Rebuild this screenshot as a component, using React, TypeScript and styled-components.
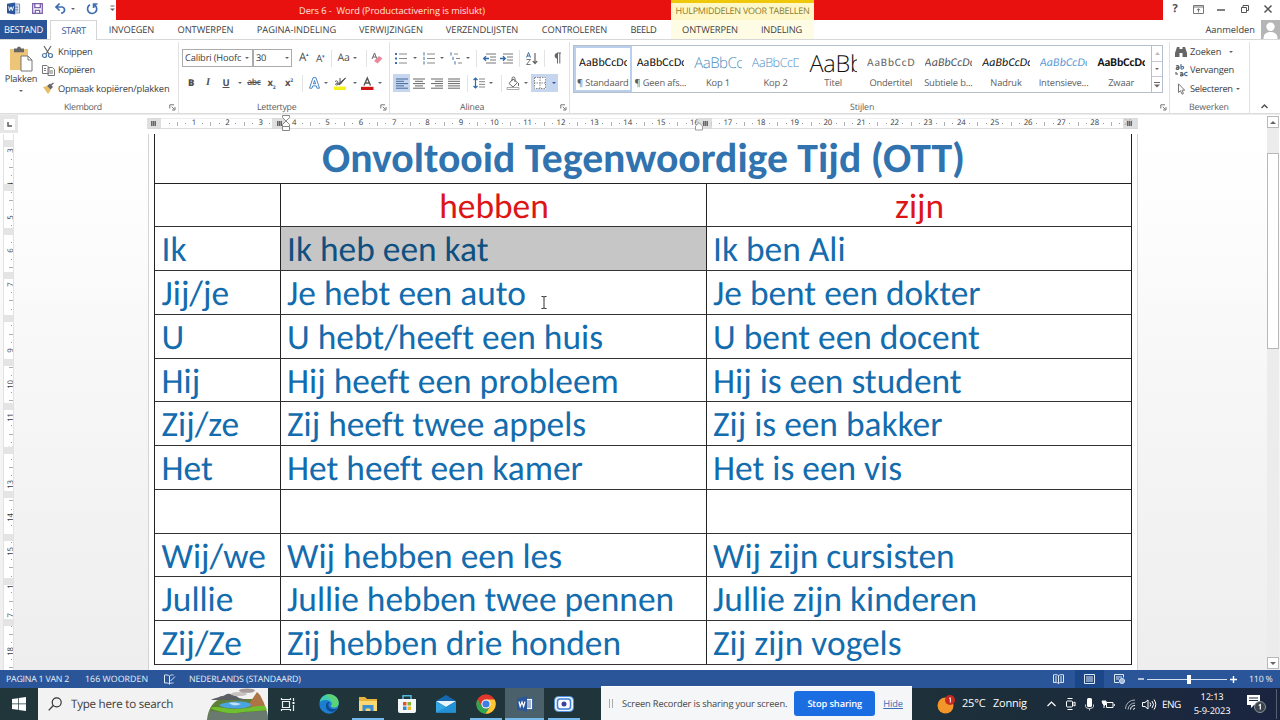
import React from "react";
import styled, { createGlobalStyle } from "styled-components";

const Global = createGlobalStyle`
  * { box-sizing: border-box; }
  body { margin: 0; overflow: hidden; }
  #root { font-family: "Open Sans", "Noto Sans", sans-serif; font-size: 9.3px; color: #3c3c3c; text-rendering: geometricPrecision; }
  svg { display: block; flex: none; overflow: visible; }
`;

/* ---------- shared ---------- */

const Window = styled.div`
  width: 1280px;
  height: 720px;
  display: flex;
  flex-direction: column;
  background: #fff;
  overflow: hidden;
`;

const Label = styled.span<{ $ls?: number; $size?: number; $color?: string }>`
  white-space: pre;
  flex: none;
  letter-spacing: ${(p) => p.$ls ?? -0.2}px;
  font-size: ${(p) => p.$size ?? 9.3}px;
  color: ${(p) => p.$color ?? "inherit"};
  line-height: 14px;
`;

const Slot = styled.span<{ $w: number; $on?: boolean }>`
  width: ${(p) => p.$w}px;
  height: 18px;
  flex: none;
  display: flex;
  align-items: center;
  justify-content: center;
  white-space: nowrap;
  background: ${(p) => (p.$on ? "#c5d6ee" : "transparent")};
`;

const CaretShape = styled.i<{ $c?: string }>`
  width: 0;
  height: 0;
  flex: none;
  border: 2.2px solid transparent;
  border-top: 2.8px solid ${(p) => p.$c ?? "#666"};
  border-bottom: 0;
`;

const Caret = ({ w, c }: { w: number; c?: string }) => (
  <Slot $w={w}><CaretShape $c={c} /></Slot>
);

const Rule = styled.i`
  width: 1px;
  height: 17px;
  background: #e3e3e3;
`;

const Divider = ({ w }: { w: number }) => <Slot $w={w}><Rule /></Slot>;

/* ---------- title bar ---------- */

const TitleBar = styled.header`
  height: 20px;
  flex: none;
  display: flex;
  background: #e9110f;
`;

const QuickAccess = styled.div`
  width: 116px;
  background: #fff;
  display: flex;
  align-items: center;
  padding-left: 7px;
  height: 20px;
  padding-bottom: 3px;
`;

const DocTitle = styled.div`
  width: 555px;
  padding: 1px 0 0 183px;
  color: #ffe3dc;
  display: flex;
  align-items: center;
`;

const ContextTitle = styled.div`
  width: 143px;
  border-top: 3px solid #efc80c;
  background: #fff7c8;
  color: #8b7b2d;
  display: flex;
  justify-content: center;
  align-items: center;
  padding-bottom: 2px;
`;

const WindowButtons = styled.div`
  margin-left: auto;
  width: 117px;
  background: #fff;
  display: flex;
  align-items: center;
  padding-bottom: 2px;
`;

/* ---------- tabs ---------- */

const TabRow = styled.nav`
  height: 20px;
  flex: none;
  display: flex;
  border-bottom: 1px solid #d8d8d8;
`;

const Tab = styled.span<{ $w: number; $kind?: "file" | "active" | "context" }>`
  width: ${(p) => p.$w}px;
  height: ${(p) => (p.$kind === "active" ? 20 : 19)}px;
  flex: none;
  display: flex;
  align-items: center;
  justify-content: center;
  padding-top: 1px;
  color: ${(p) => (p.$kind === "file" ? "#fff" : p.$kind === "active" ? "#2b579a" : "#3c3c3c")};
  background: ${(p) => (p.$kind === "file" ? "#2a5699" : p.$kind === "context" ? "#fffce6" : "#fff")};
  border: ${(p) => (p.$kind === "active" ? "1px solid #d4d4d4" : "0")};
  border-bottom: 0;
`;

const Gap = styled.i<{ $w: number }>`
  width: ${(p) => p.$w}px;
  flex: none;
`;

const Account = styled.div`
  margin-left: auto;
  display: flex;
  align-items: center;
  gap: 6px;
`;

/* ---------- ribbon ---------- */

const Ribbon = styled.section`
  height: 74px;
  flex: none;
  display: flex;
  border-bottom: 1px solid #dcdcdc;
  position: relative;
`;

const Group = styled.div<{ $w: number }>`
  width: ${(p) => p.$w}px;
  flex: none;
  height: 71px;
  margin-top: 2px;
  position: relative;
  border-right: 1px solid #e2e2e2;
  display: flex;
  flex-direction: column;
`;

const GroupName = styled.div<{ $x: number }>`
  margin-top: auto;
  height: 13px;
  flex: none;
  padding-left: ${(p) => p.$x}px;
  color: #5c5c5c;
  display: flex;
  align-items: center;
`;

const Launcher = styled.span`
  position: absolute;
  right: 2px;
  bottom: 2px;
`;

const LauncherIcon = () => (
  <Launcher>
    <svg width="7" height="7" viewBox="0 0 7 7" fill="none" stroke="#777" strokeWidth="1">
      <path d="M.8 4.5V.8H5M2.8 2.8l2.6 2.6M6 3v3H3" />
    </svg>
  </Launcher>
);

const ToolRow = styled.div<{ $x: number; $mt: number }>`
  display: flex;
  align-items: center;
  height: 18px;
  margin-top: ${(p) => p.$mt}px;
  padding-left: ${(p) => p.$x}px;
`;

const Clip = styled.div`
  display: flex;
  padding-top: 1px;
  height: 57px;
`;

const Paste = styled.div`
  width: 42px;
  display: flex;
  flex-direction: column;
  align-items: center;
  padding-top: 3px;
`;

const PasteCaret = styled.span`
  padding-top: 4px;
  display: flex;
`;

const ClipList = styled.div`
  display: flex;
  flex-direction: column;
`;

const ClipItem = styled.div<{ $icon: number }>`
  height: 18.3px;
  flex: none;
  display: grid;
  grid-template-columns: ${(p) => p.$icon}px auto;
  align-items: center;
  justify-content: start;
`;

const Combo = styled.span<{ $w: number }>`
  width: ${(p) => p.$w}px;
  height: 17.5px;
  flex: none;
  border: 1px solid #ababab;
  display: flex;
  align-items: center;
  padding-left: 2px;
`;

const ComboText = styled.span<{ $w: number }>`
  width: ${(p) => p.$w}px;
  overflow: hidden;
  display: flex;
`;

const Glyph = styled.b<{ $size: number; $weight?: number; $italic?: boolean; $under?: boolean; $strike?: boolean; $color?: string }>`
  font-size: ${(p) => p.$size}px;
  font-weight: ${(p) => p.$weight ?? 400};
  font-style: ${(p) => (p.$italic ? "italic" : "normal")};
  font-family: ${(p) => (p.$italic ? '"Liberation Serif", serif' : "inherit")};
  text-decoration: ${(p) => (p.$under ? "underline" : p.$strike ? "line-through" : "none")};
  color: ${(p) => p.$color ?? "#505050"};
  line-height: 14px;
  letter-spacing: -0.3px;
  sub, sup { font-size: 5px; line-height: 0; color: #3a6ea5; }
`;

/* ---------- styles gallery ---------- */

const Gallery = styled.div`
  display: flex;
  width: 590px;
  height: 48px;
  margin: 3px 0 0 3px;
  border: 1px solid #b5bfcc;
`;

const StyleCell = styled.div<{ $active?: boolean }>`
  width: 57.6px;
  height: 46px;
  flex: none;
  padding-top: 5px;
  display: flex;
  flex-direction: column;
  align-items: center;
  box-shadow: ${(p) => (p.$active ? "inset 0 0 0 2px #b9cfeb" : "none")};
`;

const Sample = styled.span<{ $size: number; $color: string; $weight?: number; $italic?: boolean; $ls?: number; $font?: string }>`
  width: 47.5px;
  height: 24.5px;
  flex: none;
  overflow: hidden;
  white-space: nowrap;
  line-height: 24.5px;
  font-family: ${(p) => p.$font ?? "Carlito, Lato"}, sans-serif;
  font-size: ${(p) => p.$size}px;
  font-weight: ${(p) => p.$weight ?? 400};
  font-style: ${(p) => (p.$italic ? "italic" : "normal")};
  letter-spacing: ${(p) => p.$ls ?? 0}px;
  color: ${(p) => p.$color};
`;

const GalleryScroll = styled.div`
  margin-left: auto;
  width: 11px;
  display: flex;
  flex-direction: column;
  border-left: 1px solid #b5bfcc;
`;

const ScrollStep = styled.span`
  flex: 1;
  display: flex;
  align-items: center;
  justify-content: center;
  border-bottom: 1px solid #c3cad3;
  &:last-child { border-bottom: 0; }
`;

const galleryItems = [
  { name: "¶ Standaard", text: "AaBbCcDc", ls: -0.16, size: 11.9, color: "#111", tr: 0.1 },
  { name: "¶ Geen afs...", text: "AaBbCcDc", ls: -0.16, size: 11.9, color: "#111", tr: 0.1 },
  { name: "Kop 1", text: "AaBbCc", ls: -0.1, size: 15, color: "#4f8fbf", font: '"Open Sans"', weight: 300, tr: -0.5 },
  { name: "Kop 2", text: "AaBbCcD", ls: -0.1, size: 12.6, color: "#4f8fbf", font: '"Open Sans"', weight: 300, tr: -0.45 },
  { name: "Titel", text: "AaBb", ls: -0.1, size: 23.5, color: "#111", font: '"Open Sans"', weight: 300, tr: -0.2 },
  { name: "Ondertitel", text: "AaBbCcD", ls: -0.15, size: 11.4, color: "#666", tr: 0.9 },
  { name: "Subtiele b...", text: "AaBbCcDc", ls: -0.15, size: 11.9, color: "#555", italic: true, tr: 0.15 },
  { name: "Nadruk", text: "AaBbCcDc", ls: -0.15, size: 11.9, color: "#111", italic: true, tr: 0.15 },
  { name: "Intensieve...", text: "AaBbCcDc", ls: -0.15, size: 11.9, color: "#5b9bd5", italic: true, tr: 0.15 },
  { name: "Zwaar", text: "AaBbCcDc", ls: -0.15, size: 11.8, color: "#111", weight: 700, tr: 0 },
];

/* ---------- rulers ---------- */

const RulerRow = styled.div`
  height: 20px;
  flex: none;
  display: flex;
  background: #fff;
  border-top: 1px solid #ececec;
`;

const TabCorner = styled.div`
  width: 18px;
  height: 18px;
  background: #e6e6e6;
  display: flex;
  align-items: center;
  justify-content: center;
`;

const CornerBox = styled.span`
  width: 11px;
  height: 11px;
  background: #fff;
  display: flex;
  align-items: center;
  justify-content: center;
`;

const HRuler = styled.div`
  width: 990px;
  height: 11px;
  margin: 3px 0 0 130px;
  position: relative;
  display: flex;
  padding-left: 25.2px;
  border-top: 1px solid #eee;
  border-bottom: 1px solid #ddd;
`;

const HUnit = styled.span`
  width: 33.37px;
  flex: none;
  display: grid;
  grid-template-columns: repeat(4, 8.34px);
  align-items: center;
  justify-items: center;
`;

const HUnitStart = styled.span`
  width: 8.34px;
  margin-left: -8.34px;
  flex: none;
  display: flex;
  align-items: center;
  justify-content: center;
`;

const Num = styled.span`
  width: 14px;
  text-align: center;
  font-size: 7.8px;
  font-weight: 500;
  line-height: 9px;
  letter-spacing: -0.1px;
  color: #3a3a3a;
`;

const Dot = styled.i`
  width: 1px;
  height: 1px;
  background: #999;
`;

const Tick = styled.i<{ $v?: boolean }>`
  width: ${(p) => (p.$v ? 4 : 1)}px;
  height: ${(p) => (p.$v ? 1 : 4)}px;
  background: #b0b0b0;
`;

const HMargin = styled.span<{ $x: number; $w: number; $grip: number }>`
  position: absolute;
  left: ${(p) => p.$x}px;
  top: -1px;
  width: ${(p) => p.$w}px;
  height: 11px;
  background: rgba(212, 212, 212, 0.75);
  &::after {
    content: "";
    position: absolute;
    left: ${(p) => p.$grip}px;
    top: 3px;
    width: 5px;
    height: 5px;
    background: repeating-linear-gradient(90deg, #666 0 1px, #999 1px 2px);
  }
`;

const Marker = styled.span<{ $x: number; $y: number }>`
  position: absolute;
  left: ${(p) => p.$x}px;
  top: ${(p) => p.$y}px;
`;

const VRuler = styled.div`
  width: 11px;
  height: 536px;
  margin-left: 3px;
  flex: none;
  position: relative;
  overflow: hidden;
  background: #fff;
  border: 1px solid #e2e2e2;
  border-width: 0 1px;
  display: flex;
  flex-direction: column;
  padding-top: 4.2px;
`;

const VUnit = styled.span`
  height: 33.37px;
  flex: none;
  display: grid;
  grid-template-rows: repeat(4, 8.34px);
  align-items: center;
  justify-items: center;
  ${Num} { transform: rotate(-90deg); }
`;

const RowGrip = styled.i<{ $y: number }>`
  position: absolute;
  left: 0;
  top: ${(p) => p.$y}px;
  width: 9px;
  height: 6.5px;
  background: #e4e4e4;
`;

/* ---------- document ---------- */

const Workspace = styled.main`
  height: 536px;
  flex: none;
  display: flex;
  background: linear-gradient(#fff 0, #fdfdfd 15%, #f6f6f6 50%, #eeeeee 100%);
`;

const Page = styled.article`
  margin-left: 134px;
  width: 990px;
  height: 536px;
  flex: none;
  background: #fff;
  border: 1px solid #d4d4d4;
  border-width: 0 1px;
  padding-left: 5px;
`;

const Table = styled.div`
  width: 978px;
  border: 1px solid #222;
  border-width: 0 1px;
  font-family: Carlito, Lato, sans-serif;
  font-variant-ligatures: none;
  font-size: 35.4px;
  color: #136cad;
  position: relative;
`;

const Heading = styled.div`
  height: 50px;
  border-bottom: 1px solid #222;
  text-align: center;
  font-size: 41.7px;
  font-weight: 700;
  color: #3173ae;
  line-height: 44px;
  padding: 3px 0 0 1px;
  white-space: nowrap;
`;

const Row = styled.div<{ $h: number }>`
  height: ${(p) => p.$h}px;
  display: grid;
  grid-template-columns: 125px 426px 425px;
  grid-template-rows: minmax(0, 1fr);
  border-bottom: 1px solid #333;
`;

const Cell = styled.div<{ $head?: boolean; $selected?: boolean }>`
  border-left: 1px solid #222;
  padding: 0 0 0 ${(p) => (p.$head ? 1 : 6)}px;
  &:first-child { border-left: 0; padding-left: 6.5px; }
  line-height: 44px;
  white-space: nowrap;
  text-align: ${(p) => (p.$head ? "center" : "left")};
  color: ${(p) => (p.$head ? "#dc1616" : p.$selected ? "#0f5080" : "inherit")};
  background: ${(p) => (p.$selected ? "#c6c6c6" : "transparent")};
`;

const rows: [number, string, string, string][] = [
  [43, "", "hebben", "zijn"],
  [44, "Ik", "Ik heb een kat", "Ik ben Ali"],
  [44, "Jij/je", "Je hebt een auto", "Je bent een dokter"],
  [44, "U", "U hebt/heeft een huis", "U bent een docent"],
  [43, "Hij", "Hij heeft een probleem", "Hij is een student"],
  [44, "Zij/ze", "Zij heeft twee appels", "Zij is een bakker"],
  [44, "Het", "Het heeft een kamer", "Het is een vis"],
  [44, "", "", ""],
  [43, "Wij/we", "Wij hebben een les", "Wij zijn cursisten"],
  [44, "Jullie", "Jullie hebben twee pennen", "Jullie zijn kinderen"],
  [44, "Zij/Ze", "Zij hebben drie honden", "Zij zijn vogels"],
];

const TextCursor = styled.span`
  position: absolute;
  left: 386px;
  top: 162px;
`;

const ScrollTrack = styled.aside`
  width: 12px;
  margin: -18px 1px 0 auto;
  height: 553px;
  background: #ececec;
  display: flex;
  flex-direction: column;
  justify-content: space-between;
  position: relative;
`;

const ScrollArrow = styled.span`
  height: 12px;
  background: #fff;
  border: 1px solid #b8b8b8;
  display: flex;
  align-items: center;
  justify-content: center;
`;

const ScrollThumb = styled.i`
  height: 196px;
  margin: 25px 0 auto;
  background: #fff;
  border: 1px solid #b8b8b8;
`;

/* ---------- status bar ---------- */

const StatusBar = styled.footer`
  height: 18px;
  flex: none;
  background: #2a5699;
  color: #e9f0fa;
  display: flex;
  align-items: center;
  padding-left: 6px;
`;

const StatusItem = styled.span<{ $w: number }>`
  width: ${(p) => p.$w}px;
  flex: none;
  display: flex;
  align-items: center;
`;

const ViewButton = styled.span<{ $w: number; $on?: boolean }>`
  width: ${(p) => p.$w}px;
  height: 18px;
  display: flex;
  align-items: center;
  justify-content: center;
  background: ${(p) => (p.$on ? "#1b4788" : "transparent")};
`;

const ZoomTrack = styled.span`
  width: 80px;
  height: 1px;
  background: #d5e0ef;
  display: flex;
  align-items: center;
  justify-content: center;
  margin: 0 3px;
`;

const ZoomKnob = styled.i`
  width: 4px;
  height: 9px;
  background: #fff;
  margin-left: 3px;
`;

/* ---------- taskbar ---------- */

const Taskbar = styled.div`
  height: 32px;
  flex: none;
  display: flex;
  align-items: center;
  background: linear-gradient(90deg, #21363b 0, #1e343a 65%, #1c2d3a 80%, #1a2440 100%);
  color: #fff;
  position: relative;
`;

const TaskCell = styled.span<{ $w: number; $on?: boolean; $line?: number }>`
  width: ${(p) => p.$w}px;
  height: 32px;
  flex: none;
  display: flex;
  align-items: center;
  justify-content: center;
  background: ${(p) => (p.$on ? "#4a616b" : "transparent")};
  position: relative;
  &::after {
    content: "";
    position: absolute;
    bottom: 0;
    left: calc(50% - ${(p) => (p.$line ?? 0) / 2}px);
    width: ${(p) => p.$line ?? 0}px;
    height: 2px;
    background: #76b9ed;
  }
`;

const Search = styled.div`
  width: 230px;
  height: 32px;
  flex: none;
  background: #f2f2f2;
  display: flex;
  align-items: center;
  padding-left: 10px;
  color: #3c3c3c;
  & > span { padding-top: 2px; }
`;

const Tray = styled.div`
  margin-left: auto;
  display: flex;
  align-items: center;
  height: 32px;
`;

const Clock = styled.div`
  width: 52px;
  display: flex;
  flex-direction: column;
  align-items: center;
  line-height: 14px;
`;

const ShareBar = styled.div`
  position: absolute;
  left: 601px;
  top: -2px;
  width: 311px;
  height: 34px;
  background: #f4f6f7;
  color: #444;
  display: flex;
  align-items: center;
  border-top: 1px solid #fff;
`;

const Grip = styled.i`
  width: 4px;
  height: 9px;
  margin: 0 9px 0 8px;
  border: 1px solid #aaa;
  border-width: 0 1px;
`;

const StopButton = styled.span`
  width: 81px;
  height: 25px;
  margin-left: 7px;
  border-radius: 3px;
  background: #1a6ee2;
  color: #fff;
  font-weight: 600;
  display: flex;
  align-items: center;
  justify-content: center;
`;

const HideLink = styled.span`
  margin-left: 8px;
  color: #3b6fb5;
  text-decoration: underline;
  display: flex;
`;

const TrayEdge = styled.i`
  width: 1px;
  height: 30px;
  background: #56606e;
`;

/* ---------- icons ---------- */

const WordIcon = ({ s }: { s: number }) => (
  <svg width={s} height={s} viewBox="0 0 16 16">
    <path d="M9 2.5h6.5v11H9z" fill="#fff" stroke="#2b579a" strokeWidth=".8" />
    <path d="M10 5h4M10 7h4M10 9h4M10 11h4" stroke="#2b579a" strokeWidth=".9" />
    <path d="M0 2.2 10 .5v15L0 13.8z" fill="#2b579a" />
    <path d="m2 5.5 1.2 5L5 6l1.6 4.5 1.4-5" fill="none" stroke="#fff" strokeWidth="1.2" />
  </svg>
);

const Lines = ({ rows: r, color = "#666" }: { rows: [number, number][]; color?: string }) => (
  <svg width="12" height="11" viewBox="0 0 12 11" stroke={color} strokeWidth="1">
    {r.map(([a, b], i) => <path key={i} d={`M${a} ${1 + i * 2.3}H${b}`} />)}
  </svg>
);

const ListIcon = ({ kind }: { kind: "bullet" | "number" | "multi" }) => (
  <svg width="12" height="13" viewBox="0 0 12 13">
    {[2, 6.5, 11].map((y, i) => {
      const dx = kind === "multi" ? i * 2 : 0;
      return (
        <g key={y}>
          {kind === "bullet"
            ? <rect x="0" y={y - 1} width="2" height="2" fill="#3c6ea8" />
            : <path d={`M${dx + 1} ${y - 1.7}v3.2`} stroke="#3c6ea8" strokeWidth="1" />}
          <path d={`M${4 + dx} ${y}H${kind === "multi" ? 8 + dx : 12}`} stroke="#888" />
        </g>
      );
    })}
  </svg>
);

const IndentIcon = ({ right }: { right?: boolean }) => (
  <svg width="13" height="11" viewBox="0 0 13 11" fill="none">
    <path d="M3 1h10M7 4h6M7 7h6M3 10h10" stroke="#777" />
    <path d={right ? "M0 5.5h5M3 3.3l2.3 2.2L3 7.7" : "M6 5.5H1M3 3.3.7 5.5 3 7.7"} stroke="#2f6aa8" strokeWidth="1.3" />
  </svg>
);

const CornerL = () => (
  <svg width="5" height="5" viewBox="0 0 5 5"><path d="M1 0v4h4" fill="none" stroke="#555" strokeWidth="1.4" /></svg>
);

const Hills = () => (
  <svg width="62" height="32" viewBox="0 0 62 32">
    <path d="M0 32C1 20 8 10 16 11h32c8 3 13 10 13 21z" fill="#5d7f3a" />
    <path d="M4 12c5-3 8-2 10-4 3 1 5-3 9-2 4 2 6 1 9 4l9 2H4z" fill="#5a5f63" />
    <ellipse cx="32" cy="6" rx="8" ry="2" fill="#c8c2bf" />
    <ellipse cx="40" cy="2.6" rx="8" ry="2.2" fill="#a59b9b" />
    <path d="M42 16 50 4l3 3 4 8 2 6-12 2z" fill="#ad7445" />
    <path d="M12 17c6-3 20-5 30-2 4 2 1 4-5 5-8 1-20 1-25-3z" fill="#4ba3e0" />
    <path d="M22 15c5-1 9 0 12 1-4 2-9 2-12-1z" fill="#bfe0f6" />
    <path d="M3 20c8-3 16 2 28 1 10 0 18-4 27-3l2 4c-14 2-22 1-30 3-10 1-20-2-27-5z" fill="#6fc02f" />
    <path d="M2 23c10 0 18 4 30 2 10-1 20-2 28-2l1 9H1z" fill="#6b7a70" />
  </svg>
);

/* ---------- regions ---------- */

const Title = () => (
  <TitleBar>
    <QuickAccess>
      <WordIcon s={13} />
      <Gap $w={12} />
      <svg width="11" height="11" viewBox="0 0 11 11" fill="none" stroke="#7a5fa8" strokeWidth="1.3"><path d="M.7.7h9.6v9.6H.7zM2.8.7v4h5.5v-4M3.3 10V7.3h4.4V10" /></svg>
      <Gap $w={12} />
      <svg width="12" height="11" viewBox="0 0 12 11" fill="none" stroke="#3b6cb0" strokeWidth="1.7"><path d="M1 4h6.5a3.2 3.2 0 0 1 0 6H6M4.6.5 1 4l3.6 3.5" /></svg>
      <Caret w={12} />
      <Gap $w={7} />
      <svg width="12" height="12" viewBox="0 0 12 12" fill="none" stroke="#3b6cb0" strokeWidth="1.7"><path d="M4 1.8A4.6 4.6 0 1 0 8.6 2M11.500 1H7.600v4" /></svg>
      <Gap $w={12} />
      <svg width="5" height="7" viewBox="0 0 5 7"><path d="M.5 1h4" stroke="#666" /><path d="M0 3.500h5L2.500 6z" fill="#666" /></svg>
    </QuickAccess>
    <DocTitle><Label $ls={-0.07}>Ders 6 -  Word (Productactivering is mislukt)</Label></DocTitle>
    <ContextTitle><Label $ls={-0.26} $size={9}>HULPMIDDELEN VOOR TABELLEN</Label></ContextTitle>
    <WindowButtons>
      <Slot $w={24}><Glyph $size={11} $weight={700}>?</Glyph></Slot>
      <Slot $w={22}><svg width="11" height="9" viewBox="0 0 11 9" fill="none" stroke="#777"><path d="M.5.5h10v8H.5zM.5 2h10M5.500 7.500V4M3.800 5.300l1.700-1.600 1.700 1.600" /></svg></Slot>
      <Slot $w={24}><svg width="8" height="8" viewBox="0 0 8 8"><path d="M0 5h8" stroke="#555" strokeWidth="1.500" /></svg></Slot>
      <Slot $w={23}><svg width="8" height="8" viewBox="0 0 8 8" fill="none" stroke="#555"><path d="M.5 2.500h5v5h-5zM2 2.500V.5h5.500v5H6" /></svg></Slot>
      <Slot $w={24}><svg width="8" height="8" viewBox="0 0 8 8"><path d="m.5.5 7 7m0-7-7 7" stroke="#555" strokeWidth="1.500" /></svg></Slot>
    </WindowButtons>
  </TitleBar>
);

const Tabs = () => (
  <TabRow>
    <Tab $w={47} $kind="file"><Label $ls={-0.3}>BESTAND</Label></Tab>
    <Gap $w={3} />
    <Tab $w={47} $kind="active"><Label $ls={-0.55}>START</Label></Tab>
    <Tab $w={69}><Label $ls={-0.13}>INVOEGEN</Label></Tab>
    <Tab $w={79}><Label $ls={-0.08}>ONTWERPEN</Label></Tab>
    <Tab $w={103}><Label $ls={0}>PAGINA-INDELING</Label></Tab>
    <Tab $w={86}><Label $ls={0}>VERWIJZINGEN</Label></Tab>
    <Tab $w={96}><Label $ls={-0.04}>VERZENDLIJSTEN</Label></Tab>
    <Tab $w={89}><Label $ls={-0.07}>CONTROLEREN</Label></Tab>
    <Tab $w={49}><Label $ls={-0.4}>BEELD</Label></Tab>
    <Gap $w={3} />
    <Tab $w={78} $kind="context"><Label $ls={-0.08}>ONTWERPEN</Label></Tab>
    <Tab $w={65} $kind="context"><Label $ls={-0.2}>INDELING</Label></Tab>
    <Account>
      <Label $ls={0}>Aanmelden</Label>
      <svg width="19" height="19" viewBox="0 0 19 19"><path d="M0 0h19v19H0z" fill="#b5b5b5" /><circle cx="9.500" cy="6.800" r="4.200" fill="#fff" /><path d="M2.500 19c0-5 2.500-7 7-7s7 2 7 7z" fill="#fff" /></svg>
    </Account>
  </TabRow>
);

const Clipboard = () => (
  <Group $w={179}>
    <Clip>
      <Paste>
        <svg width="24" height="26" viewBox="0 0 24 26">
          <path d="M1 3h18v21H1z" fill="#ecc578" />
          <path d="M5 2.500h3C8 0 12 0 12 2.500h3v3.700H5z" fill="#666" />
          <path d="M12 10h7l4 4v11H12z" fill="#fff" stroke="#777" />
          <path d="M19 10v4h4" fill="none" stroke="#777" />
        </svg>
        <Label $ls={-0.2}>Plakken</Label>
        <PasteCaret><CaretShape /></PasteCaret>
      </Paste>
      <ClipList>
        <ClipItem $icon={16}>
          <svg width="11" height="12" viewBox="0 0 11 12" fill="none" stroke="#666" strokeWidth="1.200"><path d="M2 0l5 8M9 0 4 8" /><circle cx="2.500" cy="9.500" r="2" stroke="#4a78a8" /><circle cx="8.500" cy="9.500" r="2" stroke="#4a78a8" /></svg>
          <Label $ls={-0.23}>Knippen</Label>
        </ClipItem>
        <ClipItem $icon={16}>
          <svg width="13" height="11" viewBox="0 0 13 11" fill="#fff" stroke="#777"><path d="M.5.5H5l2 2v6H.5zM6 2.500h4.500l2 2v6H6zM2 3.500h2M2 5.500h2M8 6h3M8 8h3" /></svg>
          <Label $ls={-0.3}>Kopiëren</Label>
        </ClipItem>
        <ClipItem $icon={16}>
          <svg width="13" height="11" viewBox="0 0 13 11"><path d="m1 4 4-1 4 4-3 4z" fill="#e6c067" /><path d="m5 3 3-2.500 3 3.500-2.500 2.500z" fill="#666" /><path d="m9 2 2.500-2" stroke="#666" strokeWidth="1.500" /></svg>
          <Label $ls={-0.15}>Opmaak kopiëren/plakken</Label>
        </ClipItem>
      </ClipList>
    </Clip>
    <GroupName $x={64}><Label $ls={-0.3} $size={8.8}>Klembord</Label></GroupName>
    <LauncherIcon />
  </Group>
);

const FontGroup = () => (
  <Group $w={211}>
    <ToolRow $x={3} $mt={7}>
      <Combo $w={71}><ComboText $w={57}><Label $ls={-0.15}>Calibri (Hoofc</Label></ComboText><Caret w={9} /></Combo>
      <Combo $w={39}><ComboText $w={28}><Label $ls={-0.3}>30</Label></ComboText><Caret w={8} /></Combo>
      <Slot $w={23}><Glyph $size={11.5}>A<sup>▴</sup></Glyph></Slot>
      <Slot $w={10}><Glyph $size={10}>A<sup>▾</sup></Glyph></Slot>
      <Divider w={12} />
      <Slot $w={13}><Glyph $size={10.5}>Aa</Glyph></Slot>
      <Caret w={10} />
      <Divider w={12} />
      <Slot $w={10}>
        <svg width="12" height="12" viewBox="0 0 12 12"><path d="M1 7 3.500 1 6 7M2 5h3" fill="none" stroke="#666" /><path d="m3 9 5-5 3.500 2.500-5 5z" fill="#e88a9c" /></svg>
      </Slot>
    </ToolRow>
    <ToolRow $x={3} $mt={7}>
      <Slot $w={18}><Glyph $size={9.5} $weight={800}>B</Glyph></Slot>
      <Slot $w={16}><Glyph $size={10.5} $italic $weight={700}>I</Glyph></Slot>
      <Slot $w={20}><Glyph $size={9.5} $weight={700} $under>U</Glyph></Slot>
      <Caret w={7} />
      <Slot $w={22}><Glyph $size={8.5} $weight={600} $strike>abc</Glyph></Slot>
      <Slot $w={13}><Glyph $size={9.5} $weight={700}>x<sub>2</sub></Glyph></Slot>
      <Slot $w={22}><Glyph $size={9.5} $weight={700}>x<sup>2</sup></Glyph></Slot>
      <Divider w={4} />
      <Slot $w={20}>
        <svg width="11" height="12" viewBox="0 0 11 12" fill="#fff" stroke="#4c86c6" strokeWidth="1"><path d="M4 .7h3l3.500 10.500H8l-.7-2.300H3.700L3 11.200H.5zM5.500 3.500 4.400 6.800h2.200z" /></svg>
      </Slot>
      <Caret w={3} />
      <Slot $w={26}>
        <svg width="13" height="13" viewBox="0 0 13 13"><path d="M0 9.500h12v3.500H0z" fill="#f6f01b" /><path d="m11.500 1-5 6-1.500 1 .5-2z" fill="#555" stroke="#555" /><path d="M1 4.500c2-1.500 3 0 3 1v2.500M4 6c-3 0-3 2-1.500 2S4 7 4 6M6 1v6" fill="none" stroke="#555" /></svg>
      </Slot>
      <Caret w={3} />
      <Slot $w={22}>
        <svg width="13" height="13" viewBox="0 0 13 13"><path d="M0 9.800h12.500v3.200H0z" fill="#d01414" /><path d="M3 8.500 6.300 1l3.200 7.500M4.200 6h4" fill="none" stroke="#555" strokeWidth="1.400" /></svg>
      </Slot>
      <Caret w={4} />
    </ToolRow>
    <GroupName $x={78}><Label $ls={-0.29} $size={8.8}>Lettertype</Label></GroupName>
    <LauncherIcon />
  </Group>
);

const ParagraphGroup = () => (
  <Group $w={180}>
    <ToolRow $x={0} $mt={7}>
      <Slot $w={22}><ListIcon kind="bullet" /></Slot><Caret w={6} />
      <Slot $w={21}><ListIcon kind="number" /></Slot><Caret w={6} />
      <Slot $w={22}><ListIcon kind="multi" /></Slot><Caret w={2} />
      <Divider w={15} />
      <Slot $w={10}><IndentIcon /></Slot>
      <Slot $w={24}><IndentIcon right /></Slot>
      <Divider w={3} />
      <Slot $w={22}>
        <svg width="12" height="13" viewBox="0 0 12 13" fill="none"><path d="M.5 5.500 2.500.5l2 5M1 4h3" stroke="#3c6ea8" /><path d="M.5 7.500h4l-4 5h4" stroke="#777" /><path d="M9 1v10M6.800 9 9 11.500 11.200 9" stroke="#666" strokeWidth="1.200" /></svg>
      </Slot>
      <Divider w={2} />
      <Slot $w={24}>
        <svg width="8" height="11" viewBox="0 0 8 11"><path d="M4 0h4M4.500 0v10.500M6.800 0v10.500" stroke="#666" strokeWidth="1" /><path d="M4.500 0a2.800 2.800 0 0 0 0 5.600z" fill="#666" /></svg>
      </Slot>
    </ToolRow>
    <ToolRow $x={3} $mt={7}>
      <Slot $w={17} $on><Lines color="#47699a" rows={[[0, 12], [0, 8], [0, 12], [0, 8], [0, 12]]} /></Slot>
      <Slot $w={18}><Lines rows={[[0, 12], [2, 10], [0, 12], [2, 10], [0, 12]]} /></Slot>
      <Slot $w={18}><Lines rows={[[0, 12], [4, 12], [0, 12], [4, 12], [0, 12]]} /></Slot>
      <Slot $w={16}><Lines rows={[[0, 12], [0, 12], [0, 12], [0, 12], [0, 12]]} /></Slot>
      <Divider w={10} />
      <Slot $w={14}>
        <svg width="12" height="12" viewBox="0 0 12 12" fill="none"><path d="M2.500 1v10M.5 3l2-2 2 2M.5 9l2 2 2-2" stroke="#2f6aa8" strokeWidth="1.200" /><path d="M6 2h6M6 4.700h6M6 7.400h6M6 10h6" stroke="#888" /></svg>
      </Slot>
      <Caret w={10} />
      <Divider w={10} />
      <Slot $w={14}>
        <svg width="13" height="13" viewBox="0 0 13 13" fill="none" stroke="#666"><path d="M6 2 2 6.500l4 3.500 4.500-4.500zM5 4V1.500a1.500 1.500 0 0 1 3 0V5M11.500 6v3" /><path d="M0 10.500h12v2H0z" stroke="#aaa" fill="#fff" /></svg>
      </Slot>
      <Caret w={11} />
      <Slot $w={18} $on>
        <svg width="12" height="12" viewBox="0 0 12 12" fill="#fff"><path d="M0 0h12v12H0z" /><path d="M.5.5h11v11H.5zM6 0v12M0 6h12" fill="none" stroke="#888" strokeDasharray="1.500 1" /></svg>
      </Slot>
      <Slot $w={9} $on><CaretShape $c="#2b579a" /></Slot>
    </ToolRow>
    <GroupName $x={70}><Label $ls={-0.15} $size={8.8}>Alinea</Label></GroupName>
    <LauncherIcon />
  </Group>
);

const StylesGroup = () => (
  <Group $w={600}>
    <Gallery>
      {galleryItems.map((g, i) => (
        <StyleCell key={g.name} $active={i === 0}>
          <Sample $size={g.size} $color={g.color} $font={g.font} $weight={g.weight} $italic={g.italic} $ls={g.tr}>{g.text}</Sample>
          <Label $ls={g.ls} $color="#5c5c5c">{g.name}</Label>
        </StyleCell>
      ))}
      <GalleryScroll>
        <ScrollStep><svg width="5" height="3" viewBox="0 0 5 3"><path d="M0 3h5L2.500 0z" fill="#bbb" /></svg></ScrollStep>
        <ScrollStep><CaretShape /></ScrollStep>
        <ScrollStep><svg width="6" height="6" viewBox="0 0 6 6"><path d="M0 .5h6" stroke="#666" /><path d="M0 2.500h6L3 5.500z" fill="#666" /></svg></ScrollStep>
      </GalleryScroll>
    </Gallery>
    <GroupName $x={280}><Label $ls={-0.1} $size={8.8}>Stijlen</Label></GroupName>
    <LauncherIcon />
  </Group>
);

const EditGroup = () => (
  <Group $w={80}>
    <Clip>
      <Gap $w={5} />
      <ClipList>
        <ClipItem $icon={15}>
          <svg width="12" height="10" viewBox="0 0 12 10" fill="#666"><path d="M2 0h2.500v2h3V0H10l2 6v4H7.500V6h-3v4H0V6z" /></svg>
          <StatusItem $w={48}><Label $ls={-0.1}>Zoeken</Label><Gap $w={8} /><CaretShape /></StatusItem>
        </ClipItem>
        <ClipItem $icon={15}>
          <svg width="13" height="12" viewBox="0 0 13 12" fill="none" strokeWidth="1.100"><path d="M1 2c2-1 3 0 3 1v2M4 3.500C1 3 .5 5.500 2 5.500S4 4.500 4 3.500M5 9c2-1 3 0 3 1v2M8 10c-3 0-3 2-1.500 2S8 11 8 10M1 8v2h2" stroke="#555" /><path d="M6 0v5M6 3c3-2 4 2.500 0 2M12.500 8.500c-4-1-4 4 0 3" stroke="#3c6ea8" /></svg>
          <Label $ls={-0.24}>Vervangen</Label>
        </ClipItem>
        <ClipItem $icon={15}>
          <svg width="12" height="12" viewBox="0 0 12 12" fill="#fff" stroke="#777"><path d="M3.500.8v8.700l2-1.800 1.500 3.500 1.500-.7L7 7.200h2.700z" /></svg>
          <StatusItem $w={52}><Label $ls={-0.28}>Selecteren</Label><Gap $w={3} /><CaretShape /></StatusItem>
        </ClipItem>
      </ClipList>
    </Clip>
    <GroupName $x={19}><Label $ls={-0.15} $size={8.8}>Bewerken</Label></GroupName>
  </Group>
);

const Collapse = styled.span`
  margin: auto 12px 4px auto;
`;

const HorizontalRuler = () => (
  <RulerRow>
    <TabCorner><CornerBox><CornerL /></CornerBox></TabCorner>
    <HRuler>
      <HUnitStart><Dot /></HUnitStart>
      {Array.from({ length: 28 }, (_, i) => (
        <HUnit key={i}><Tick /><Dot /><Num>{i + 1}</Num><Dot /></HUnit>
      ))}
      <HUnit><Tick /><Dot /><Num>29</Num><i /></HUnit>
      <HMargin $x={-1} $w={14} $grip={4} />
      <HMargin $x={124} $w={13} $grip={5} />
      <HMargin $x={549} $w={15} $grip={6} />
      <HMargin $x={975} $w={15} $grip={4} />
      <Marker $x={134} $y={-4}>
        <svg width="8" height="16" viewBox="0 0 8 16" fill="#fff" stroke="#888"><path d="M.5.5h7v2L4 6 .5 2.500zM4 6l3.500 3.500v2h-7v-2zM.5 11.500h7v4h-7z" /></svg>
      </Marker>
      <Marker $x={547} $y={3}>
        <svg width="8" height="9" viewBox="0 0 8 9" fill="#fff" stroke="#999"><path d="M4 .7 7.500 4v4h-7V4z" /></svg>
      </Marker>
    </HRuler>
  </RulerRow>
);

const VerticalRuler = () => (
  <VRuler>
    {Array.from({ length: 16 }, (_, i) => (
      <VUnit key={i}><Dot /><Num>{i + 3}</Num><Dot /><Tick $v /></VUnit>
    ))}
    {[6, 50, 94, 138, 181, 225, 269, 313, 357, 400, 444, 485].map((y) => <RowGrip key={y} $y={y} />)}
  </VRuler>
);

const Document = () => (
  <Workspace>
    <VerticalRuler />
    <Page>
      <Table>
        <Heading>Onvoltooid Tegenwoordige Tijd (OTT)</Heading>
        {rows.map(([h, a, b, c], i) => (
          <Row key={i} $h={h}>
            <Cell>{a}</Cell>
            <Cell $head={i === 0} $selected={i === 1}>{b}</Cell>
            <Cell $head={i === 0}>{c}</Cell>
          </Row>
        ))}
        <TextCursor>
          <svg width="6" height="13" viewBox="0 0 6 13" fill="none" stroke="#333"><path d="M.5.5H2.500L3 1.200 3.500.5h2M3 1v11M.5 12.500h2l.5-.7.5.7h2" /></svg>
        </TextCursor>
      </Table>
    </Page>
    <ScrollTrack>
      <ScrollArrow><svg width="6" height="3" viewBox="0 0 6 3"><path d="M0 3h6L3 0z" fill="#666" /></svg></ScrollArrow>
      <ScrollThumb />
      <ScrollArrow><svg width="6" height="3" viewBox="0 0 6 3"><path d="M0 0h6L3 3z" fill="#666" /></svg></ScrollArrow>
    </ScrollTrack>
  </Workspace>
);

const Status = () => (
  <StatusBar>
    <StatusItem $w={79}><Label $ls={-0.23} $size={8.8}>PAGINA 1 VAN 2</Label></StatusItem>
    <StatusItem $w={79}><Label $ls={0.06} $size={8.8}>166 WOORDEN</Label></StatusItem>
    <StatusItem $w={25}>
      <svg width="12" height="11" viewBox="0 0 12 11" fill="none" stroke="#dfe8f5"><path d="M5.500 2C4 .8 2 .8.500 1v8c2-.2 4 0 5 1 1-1 2.500-1.200 4-1M5.500 2v8M5.500 2C7 .9 8 .8 9.500 1M6.500 7 11 2.500" /></svg>
    </StatusItem>
    <StatusItem $w={855}><Label $ls={-0.14} $size={8.8}>NEDERLANDS (STANDAARD)</Label></StatusItem>
    <ViewButton $w={28}><svg width="11" height="10" viewBox="0 0 11 10" fill="none" stroke="#dfe8f5"><path d="M5.500 1.500C4 .5 2 .5.500.8v7.700c2-.2 4 0 5 .9 1-.9 3-1.100 5-.9V.8c-2-.2-3.500-.3-5 .7v8M2 3h2M2 5h2M2 7h2M7 3h2M7 5h2M7 7h2" /></svg></ViewButton>
    <Gap $w={3} />
    <ViewButton $w={29} $on><svg width="11" height="10" viewBox="0 0 11 10" fill="none" stroke="#dfe8f5"><path d="M.5.500h10v9H.5zM2 3h7M2 5h7M2 7h7" /></svg></ViewButton>
    <ViewButton $w={30}><svg width="11" height="10" viewBox="0 0 11 10" fill="none" stroke="#dfe8f5"><path d="M5 8.500H.5v-8h9v3M2 3h6M2 5h3" /><circle cx="8" cy="7" r="2.500" fill="#9fb8dc" /></svg></ViewButton>
    <Gap $w={4} />
    <svg width="6" height="2" viewBox="0 0 6 2"><path d="M0 1h6" stroke="#fff" strokeWidth="1.300" /></svg>
    <ZoomTrack><ZoomKnob /></ZoomTrack>
    <svg width="7" height="7" viewBox="0 0 7 7"><path d="M0 3.500h7M3.500 0v7" stroke="#fff" strokeWidth="1.400" /></svg>
    <Gap $w={12} />
    <Label $ls={-0.2} $size={8.8}>110 %</Label>
  </StatusBar>
);

const Tasks = () => (
  <Taskbar>
    <TaskCell $w={38}><svg width="14" height="14" viewBox="0 0 14 14" fill="#fff"><path d="M0 2 6 1.200v5.400H0zM6.700 1.100 14 0v6.600H6.700zM0 7.300h6v5.400L0 12zM6.700 7.300H14V14l-7.300-1z" /></svg></TaskCell>
    <Search>
      <svg width="14" height="14" viewBox="0 0 14 14" fill="none" stroke="#333" strokeWidth="1.200"><circle cx="8.700" cy="5.300" r="4.500" /><path d="M5.300 8.500.7 13.300" /></svg>
      <Gap $w={9} />
      <Label $ls={-0.24} $size={11.6}>Type here to search</Label>
      <Gap $w={34} />
      <Hills />
    </Search>
    <TaskCell $w={39}>
      <svg width="14" height="13" viewBox="0 0 14 13" fill="none" stroke="#e8edef" strokeWidth="1.200"><path d="M1.500 3.500h7v6h-7zM.5 0v1.500h9V0M.5 13v-1.500h9V13M12.500 0v3M12.500 7v6" /><path d="M11.500 4h2v2h-2z" fill="#fff" stroke="none" /></svg>
    </TaskCell>
    <Gap $w={2} />
    <TaskCell $w={39}>
      <svg width="20" height="20" viewBox="0 0 20 20">
        <circle cx="10" cy="10" r="9.700" fill="#1c7fd0" />
        <path d="M.6 8.500C1.500 3 5.500.3 10 .3c6 0 9.700 4.500 9.700 8.700 0 3-2.200 4.500-4.600 4.500-2 0-3.300-.8-3-1.700.9-1.300 1-3-.9-4.300C8 5.500 3 5.500.6 8.500z" fill="#3fcdb0" />
        <path d="M10 .3c6 0 9.700 4.500 9.700 8.700 0 3-2.200 4.500-4.600 4.500-2 0-3.300-.8-3-1.700 3-2 1-8-6-10.500C7.500.6 8.500.3 10 .3z" fill="#6ad65e" opacity=".7" />
        <path d="M7.500 9.500c-2 4 1 8.500 6 8.200 2-.3 4-1.700 5-3.200-3 1.500-8 1-9-2.500-.4-1.500.1-3 1.200-3.800-1.200-.4-2.600.2-3.200 1.300z" fill="#0d4c96" />
      </svg>
    </TaskCell>
    <TaskCell $w={39} $line={32}>
      <svg width="18" height="16" viewBox="0 0 18 16"><path d="M0 1h6l2 2h10v12H0z" fill="#e9b43c" /><path d="M0 5h18v10H0z" fill="#fbd873" /><path d="M3.500 15V9h11v6h-3.200v-2.500H6.700V15z" fill="#3f8fd0" /></svg>
    </TaskCell>
    <TaskCell $w={39}>
      <svg width="18" height="18" viewBox="0 0 18 18"><path d="M5 4V.8h8V4" fill="none" stroke="#55b8d8" strokeWidth="1.500" /><path d="M0 4h18v12q0 2-2 2H2q-2 0-2-2z" fill="#f4f7f8" /><path d="M5 7h3.500v3.500H5z" fill="#e2532b" /><path d="M9.500 7H13v3.500H9.500z" fill="#7cb82f" /><path d="M5 11.500h3.500V15H5z" fill="#2a8ad8" /><path d="M9.500 11.500H13V15H9.500z" fill="#f2b61d" /></svg>
    </TaskCell>
    <TaskCell $w={40}>
      <svg width="20" height="18" viewBox="0 0 20 18"><path d="M0 6 10 0l10 6v11.500H0z" fill="#1666b0" /><path d="M0 6h20l-10 6z" fill="#e9f5fc" /><path d="M0 6.500 20 17.500H0z" fill="#35a7e4" /><path d="M20 6.500 0 17.500h20z" fill="#2490d6" /></svg>
    </TaskCell>
    <TaskCell $w={39} $line={32}>
      <svg width="20" height="20" viewBox="0 0 20 20"><circle cx="10" cy="10" r="9.700" fill="#e2382b" /><path d="M1.600 5.200A9.700 9.700 0 0 0 9.500 19.700L14.200 12.500 10 14.800 5.800 12.400z" fill="#2fa650" /><path d="M18.600 5.500H10l4.200 7-4.700 7.200A9.700 9.700 0 0 0 18.600 5.500z" fill="#fcc934" /><circle cx="10" cy="10" r="4.600" fill="#fff" /><circle cx="10" cy="10" r="3.600" fill="#3c7de6" /></svg>
    </TaskCell>
    <TaskCell $w={39} $on $line={39}><WordIcon s={16} /></TaskCell>
    <TaskCell $w={40} $line={32}>
      <svg width="20" height="16" viewBox="0 0 20 16"><rect x=".5" y=".5" width="19" height="15" rx="4" fill="#eef4fb" stroke="#4a90dd" /><rect x="3.500" y="3" width="13" height="10" rx="2.500" fill="#fff" stroke="#3d7fd6" strokeWidth="1.500" /><circle cx="10" cy="8" r="2.500" fill="#3c3f9c" /></svg>
    </TaskCell>
    <ShareBar>
      <Grip />
      <Label $ls={-0.15}>Screen Recorder is sharing your screen.</Label>
      <StopButton><Label $ls={-0.12}>Stop sharing</Label></StopButton>
      <HideLink><Label $ls={-0.1}>Hide</Label></HideLink>
    </ShareBar>
    <Tray>
      <svg width="19" height="19" viewBox="0 0 19 19"><circle cx="8.500" cy="10.500" r="8" fill="#f3962a" /><circle cx="13" cy="5" r="5" fill="#c8291f" /><path d="M12 3.500 13.300 2.800V7.500" fill="none" stroke="#fff" /></svg>
      <Gap $w={6} />
      <StatusItem $w={31}><Label $ls={-0.2} $size={11}>25°C</Label></StatusItem>
      <StatusItem $w={48}><Label $ls={-0.25} $size={11}>Zonnig</Label></StatusItem>
      <TaskCell $w={20}><svg width="9" height="6" viewBox="0 0 9 6"><path d="m.5 5 4-4 4 4" fill="none" stroke="#fff" strokeWidth="1.200" /></svg></TaskCell>
      <TaskCell $w={19}><svg width="10" height="12" viewBox="0 0 10 12" fill="none" stroke="#fff"><rect x=".5" y="3" width="6" height="6" rx="1" /><path d="M6.500 5.500 9 4v4L6.500 6.500M1.500.5h5M1.500 11.500h5" /></svg></TaskCell>
      <TaskCell $w={18}><svg width="9" height="13" viewBox="0 0 9 13"><rect x="2" y="0" width="5" height="9" rx="1.500" fill="#fff" /><path d="M.5 6.500v2q0 2 4 2t4-2v-2M4.500 10.500v2" fill="none" stroke="#ccc" /></svg></TaskCell>
      <TaskCell $w={21}><svg width="13" height="9" viewBox="0 0 13 9" fill="none" stroke="#fff"><path d="M4.500 2.500H11v5H4.500zM12.300 4v2" /><path d="M0 1h4v3L2.500 5.500 1 4zM2 5v3" fill="#fff" /></svg></TaskCell>
      <TaskCell $w={21}><svg width="10" height="11" viewBox="0 0 10 11" fill="none" stroke="#a9b2bb"><path d="M.5 10A9 9 0 0 1 10 1M3 10.500A7 7 0 0 1 10 4" /><path d="M5.500 10.500A4.500 4.500 0 0 1 10 6.500M8 10.500 10 9" stroke="#fff" /></svg></TaskCell>
      <TaskCell $w={17}><svg width="14" height="11" viewBox="0 0 14 11" fill="none" stroke="#fff"><path d="M.5 3.500H3L6 1v9L3 7.500H.5zM8 3.500q1.500 2 0 4M10 2q3 3.500 0 7M12 .5q3.500 5 0 10" /></svg></TaskCell>
      <Gap $w={5} />
      <StatusItem $w={24}><Label $ls={-0.5} $size={10}>ENG</Label></StatusItem>
      <Clock><Label $ls={-0.15}>12:13</Label><Label $ls={-0.15}>5-9-2023</Label></Clock>
      <Gap $w={9} />
      <svg width="20" height="20" viewBox="0 0 20 20"><path d="M0 1h13v10H7l-3 3v-3H0z" fill="#fff" /><path d="M2 4h9M2 6.500h9" stroke="#1b2a40" /><circle cx="13" cy="13" r="5.500" fill="#3b434d" stroke="#8a9199" /><path d="M11.800 11.500 13.300 10.500v5" fill="none" stroke="#fff" strokeWidth="1.200" /></svg>
      <Gap $w={9} />
      <TrayEdge />
      <Gap $w={3} />
    </Tray>
  </Taskbar>
);

export default function App() {
  return (
    <Window>
      <Global />
      <Title />
      <Tabs />
      <Ribbon>
        <Clipboard />
        <FontGroup />
        <ParagraphGroup />
        <StylesGroup />
        <EditGroup />
        <Collapse><svg width="7" height="5" viewBox="0 0 7 5"><path d="m.5 4 3-3 3 3" fill="none" stroke="#555" strokeWidth="1.500" /></svg></Collapse>
      </Ribbon>
      <HorizontalRuler />
      <Document />
      <Status />
      <Tasks />
    </Window>
  );
}
